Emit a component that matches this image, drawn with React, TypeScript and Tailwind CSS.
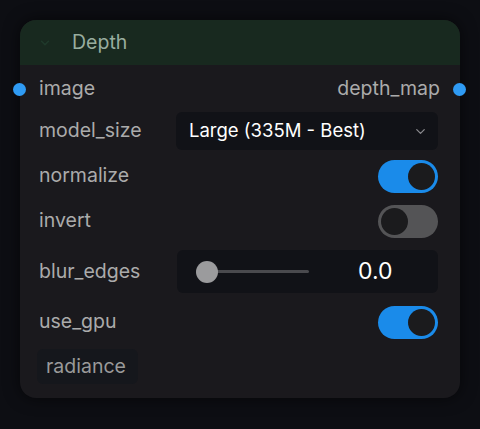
import { ChevronDown } from "lucide-react";

function Toggle({ on }: { on: boolean }) {
  return (
    <div
      className={`w-[60px] h-[33px] rounded-full p-[3px] flex items-center ${
        on ? "bg-[#1a8bea] justify-end" : "bg-[#545456] justify-start"
      }`}
    >
      <div className="w-[27px] h-[27px] rounded-full bg-[#1b1b1d]" />
    </div>
  );
}

function Label({ children }: { children: string }) {
  return <span className="text-[19.5px] text-[#ababab]">{children}</span>;
}

export default function App() {
  return (
    <div
      className="w-[480px] h-[429px] bg-[#0d0e13] p-5"
      style={{ fontFamily: "Inter, 'Noto Sans', sans-serif" }}
    >
      <div className="relative w-[440px] h-[378px] rounded-2xl bg-[#1a191d] shadow-[0_0_16px_rgba(0,0,0,0.6)] flex flex-col">
        {/* Header */}
        <div className="h-[45px] rounded-t-2xl bg-[#18291f] flex items-center pl-[18px] gap-[20px]">
          <ChevronDown size={14} className="text-[#1f3a2b]" strokeWidth={2.5} />
          <span className="text-[19.5px] text-[#98ad9f]">Depth</span>
        </div>

        <div className="flex flex-col pl-[19px] pr-[22px]">
          {/* image / depth_map */}
          <div className="relative mt-[6px] h-[36px] flex items-center justify-between">
            <span className="absolute -left-[26px] w-[13px] h-[13px] rounded-full bg-[#2f9bf4]" />
            <Label>image</Label>
            <span className="text-[19.5px] text-[#ababab] mr-[-2px]">depth_map</span>
            <span className="absolute -right-[28px] w-[13px] h-[13px] rounded-full bg-[#2f9bf4]" />
          </div>

          {/* model_size */}
          <div className="mt-[5px] h-[38px] flex items-center justify-between">
            <Label>model_size</Label>
            <div className="w-[262px] h-[38px] rounded-md bg-[#111217] flex items-center justify-between pl-[13px] pr-[10px]">
              <span className="text-[18.5px] text-white">Large (335M - Best)</span>
              <ChevronDown size={15} className="text-[#8a8a8e]" />
            </div>
          </div>

          {/* normalize */}
          <div className="mt-[9px] h-[34px] flex items-center justify-between">
            <Label>normalize</Label>
            <Toggle on />
          </div>

          {/* invert */}
          <div className="mt-[11px] h-[34px] flex items-center justify-between">
            <Label>invert</Label>
            <Toggle on={false} />
          </div>

          {/* blur_edges */}
          <div className="mt-[12px] h-[43px] flex items-center justify-between">
            <Label>blur_edges</Label>
            <div className="w-[261px] h-[43px] rounded-md bg-[#111217] flex items-center pl-[19px]">
              <div className="relative w-[114px] h-[22px] flex items-center">
                <div className="ml-[11px] w-[102px] h-[3px] rounded-full bg-[#4a4a4e]" />
                <div className="absolute left-0 w-[22px] h-[22px] rounded-full bg-[#9b9b9d]" />
              </div>
              <span className="ml-[48px] text-[23px] text-white">0.0</span>
            </div>
          </div>

          {/* use_gpu */}
          <div className="mt-[12px] h-[34px] flex items-center justify-between">
            <Label>use_gpu</Label>
            <Toggle on />
          </div>

          {/* tag */}
          <div className="mt-[10px] h-[35px] flex">
            <span className="h-[35px] pl-[9px] pr-[12px] -ml-[2px] rounded-md bg-[#15171c] flex items-center text-[19.5px] text-[#9a9a9a]">
              radiance
            </span>
          </div>
        </div>
      </div>
    </div>
  );
}
